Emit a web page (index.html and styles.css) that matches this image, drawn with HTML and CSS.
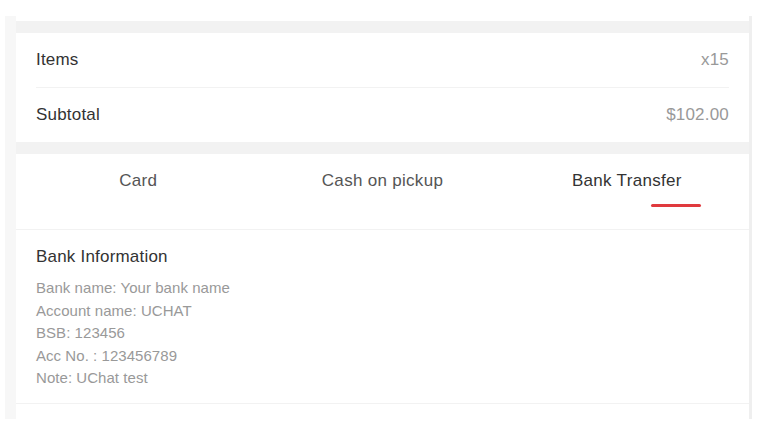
FILE: index.html
```html
<!DOCTYPE html>
<html lang="en">
<head>
    <meta charset="UTF-8">
    <meta name="viewport" content="width=device-width, initial-scale=1.0">
    <title>Checkout - Payment</title>
    <link rel="stylesheet" href="styles.css">
</head>
<body>
    <div class="page">
        <div class="band"></div>
        <section class="summary">
            <div class="row">
                <span>Items</span>
                <span class="value">x15</span>
            </div>
            <div class="row">
                <span>Subtotal</span>
                <span class="value">$102.00</span>
            </div>
        </section>
        <div class="band"></div>
        <nav class="tabs">
            <div class="tab">Card</div>
            <div class="tab">Cash on pickup</div>
            <div class="tab active">Bank Transfer<span class="underline"></span></div>
        </nav>
        <section class="bank-info">
            <h2>Bank Information</h2>
            <p>Bank name: Your bank name</p>
            <p>Account name: UCHAT</p>
            <p>BSB: 123456</p>
            <p>Acc No. : 123456789</p>
            <p>Note: UChat test</p>
        </section>
    </div>
</body>
</html>
```

FILE: styles.css
```css
body {
    font-family: 'Liberation Sans', Arial, sans-serif;
    background: #fff;
    color: #333;
    margin: 0;
    padding: 0;
}

.page {
    box-sizing: border-box;
    width: 747px;
    height: 403px;
    margin: 16px 0 0 5px;
    padding-top: 5px;
    border-left: 11px solid #f7f7f7;
    border-right: 3px solid #efefef;
    background: #fff;
}

.band {
    height: 12px;
    background: #f2f2f2;
}

.summary {
    padding: 0 20px;
}

.row {
    display: flex;
    justify-content: space-between;
    align-items: center;
    height: 54px;
    font-size: 17px;
    letter-spacing: 0.2px;
    color: #333;
}

.row + .row {
    border-top: 1px solid #f2f2f2;
}

.row .value {
    color: #999;
}

.tabs {
    display: grid;
    grid-template-columns: repeat(3, 1fr);
    height: 75px;
    border-bottom: 1px solid #f2f2f2;
}

.tab {
    position: relative;
    padding-top: 18px;
    line-height: 18px;
    font-size: 17px;
    letter-spacing: 0.3px;
    text-align: center;
    color: #555;
}

.tab.active {
    color: #333;
}

.underline {
    position: absolute;
    top: 50px;
    left: 146px;
    width: 50px;
    height: 3px;
    border-radius: 2px;
    background: #e03a3e;
}

.bank-info {
    padding: 17px 20px 13px;
    border-bottom: 1px solid #f2f2f2;
}

.bank-info h2 {
    margin: 0 0 10px;
    font-size: 17px;
    letter-spacing: 0.2px;
    font-weight: normal;
    line-height: 20px;
    color: #333;
}

.bank-info p {
    margin: 0;
    font-size: 15px;
    letter-spacing: 0.05px;
    line-height: 22.5px;
    color: #999;
}
```
